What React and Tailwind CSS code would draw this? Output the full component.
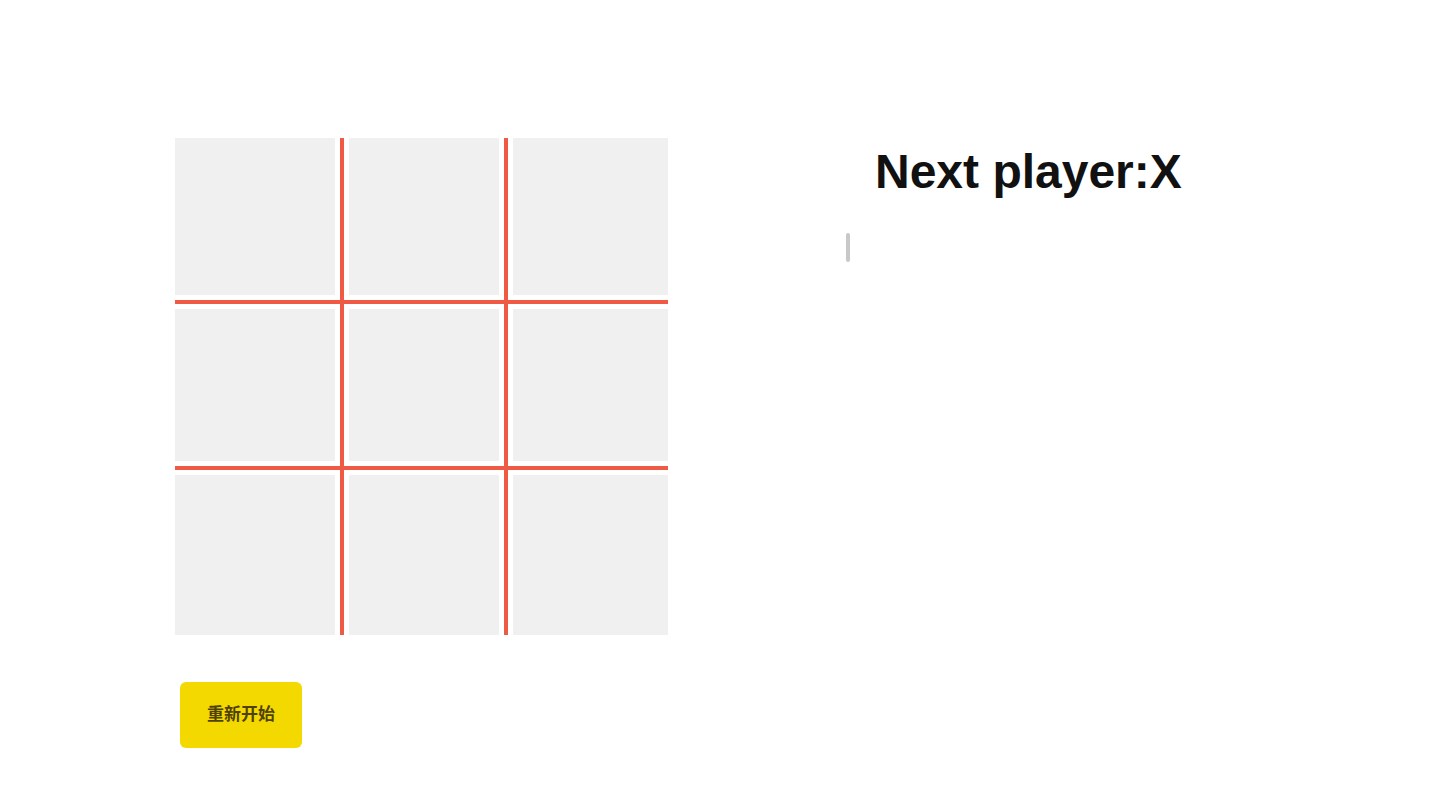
import React from 'react';

const COLS = ['w-[169px] pr-[5px]', 'w-[164px] px-[5px]', 'w-[160px] pl-[5px]'];
const ROWS = ['h-[166px] pb-[5px]', 'h-[166px] py-[5px]', 'h-[165px] pt-[5px]'];

function Cell({ row, col }) {
  // the red lines are only drawn between cells, never on the outer edge
  const right = col < 2 ? 'border-r-4' : '';
  const bottom = row < 2 ? 'border-b-4' : '';
  return (
    <div className={`${COLS[col]} ${ROWS[row]} ${right} ${bottom} border-[#ef5a45]`}>
      <div className="w-full h-full bg-[#f0f0f0]" />
    </div>
  );
}

function Board() {
  const cells = [];
  for (let r = 0; r < 3; r++) {
    for (let c = 0; c < 3; c++) {
      cells.push(<Cell key={`${r}-${c}`} row={r} col={c} />);
    }
  }
  return <div className="grid grid-cols-[169px_164px_160px] w-[493px]">{cells}</div>;
}

export default function App() {
  return (
    <div className="min-h-[810px] w-[1440px] bg-white flex" style={{ fontFamily: '"Liberation Sans", Arial, "Noto Sans CJK SC", sans-serif' }}>
      <div className="flex flex-col pl-[175px] pt-[138px]">
        <Board />
        <button className="mt-[47px] ml-[5px] w-[122px] h-[66px] rounded-md bg-[#f3d900] text-[#4f4200] text-[17px] font-bold flex items-center justify-center">
          重新开始
        </button>
      </div>

      <div className="flex flex-col pl-[178px] pt-[148px]">
        <div className="ml-[29px] text-[48px] leading-[48px] font-bold text-[#111]">Next player:X</div>
        <div className="mt-[37px] w-[4px] h-[29px] bg-[#c8c8c8] rounded-sm" />
      </div>
    </div>
  );
}
